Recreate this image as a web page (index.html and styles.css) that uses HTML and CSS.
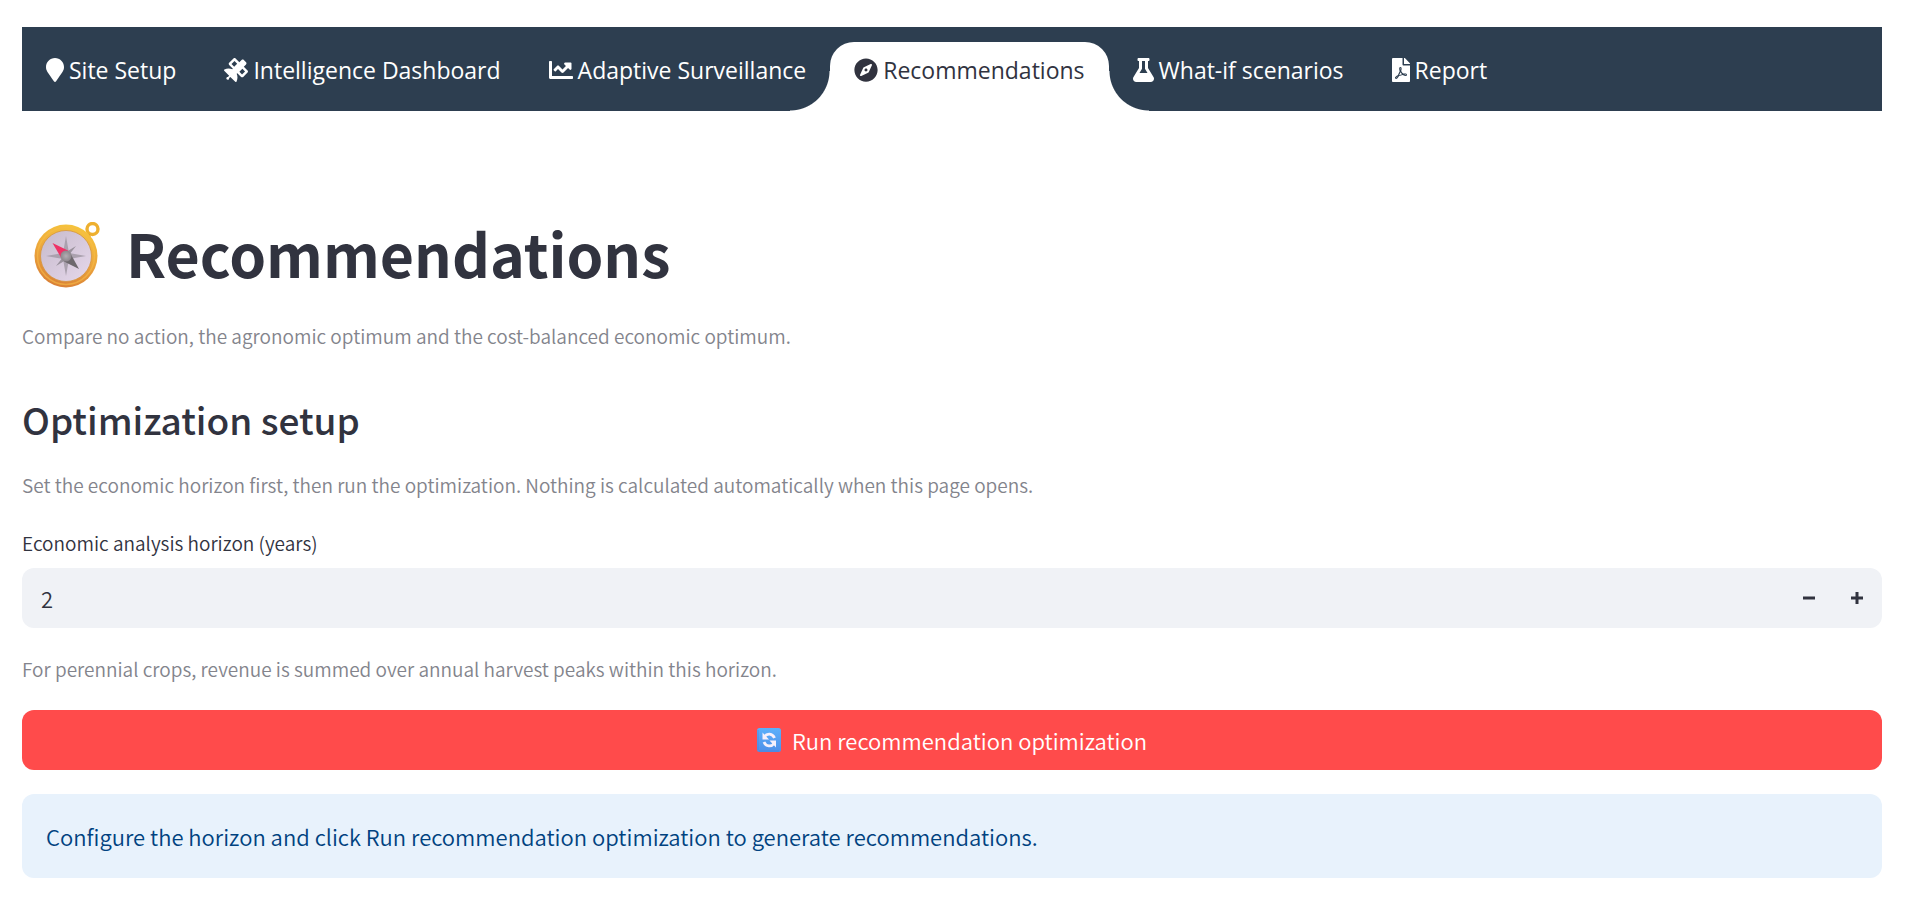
FILE: index.html
```
<!DOCTYPE html>
<html lang="en">
  <head>
    <meta charset="UTF-8" />
    <meta name="viewport" content="width=device-width, initial-scale=1.0" />
    <title>Recommendations</title>
    <link rel="stylesheet" href="styles.css">
  </head>
  <body>
    <nav class="navbar">
      <a class="tab" href="#site-setup">
        <svg class="icon" viewBox="0 0 384 512" width="18" height="24" aria-hidden="true"><path d="M172.268 501.67C26.97 291.031 0 269.413 0 192 0 85.961 85.961 0 192 0s192 85.961 192 192c0 77.413-26.97 99.031-172.268 309.67-9.535 13.774-29.93 13.773-39.464 0z"/></svg>
        Site Setup
      </a>
      <a class="tab" href="#dashboard">
        <svg class="icon" viewBox="0 0 512 512" width="24" height="24" aria-hidden="true"><path fill-rule="evenodd" d="M502.700 265l-80.300-80.400 47.800-47.900c13.100-13.100 13.100-34.400 0-47.500l-47.500-47.500c-13.100-13.100-34.400-13.100-47.500 0l-47.800 47.900-80.300-80.300c-12.400-12.400-32.600-12.400-45 0l-92.600 92.600c-12.400 12.400-12.400 32.600 0 45l80.300 80.300-13.800 13.800C127 220 64 217 9 246c-10 5-12 18-4 26l105 106-26 26c-19-4-35 11-35 30 0 17 13 30 30 30 19 0 34-16 30-35l26-26 105 105c8 8 21 6 26-4 29-55 26-118 4.800-166.900l13.800-13.800 80.300 80.300c12.400 12.400 32.600 12.400 45 0l92.700-92.700c12.400-12.400 12.400-32.600 0-46zM224 63l57 57-64 64-57-57zM385 351l-57-57 64-64 57 57z"/></svg>
        Intelligence Dashboard
      </a>
      <a class="tab" href="#surveillance">
        <svg class="icon" viewBox="0 0 512 512" width="24" height="24" aria-hidden="true"><path d="M496 384H64V80c0-8.840-7.160-16-16-16H16C7.160 64 0 71.160 0 80v336c0 17.670 14.330 32 32 32h464c8.840 0 16-7.160 16-16v-32c0-8.840-7.160-16-16-16zM464 96H345.940c-21.380 0-32.090 25.850-16.970 40.970l32.400 32.400L288 242.750l-73.370-73.370c-12.500-12.500-32.760-12.500-45.250 0l-68.690 68.690c-6.250 6.250-6.250 16.380 0 22.630l22.620 22.620c6.250 6.250 16.380 6.250 22.630 0L192 237.250l73.370 73.370c12.500 12.500 32.760 12.500 45.250 0l96-96 32.400 32.400c15.120 15.120 40.970 4.410 40.970-16.970V112c.01-8.840-7.150-16-15.990-16z"/></svg>
        Adaptive Surveillance
      </a>
      <a class="tab active" href="#recommendations" aria-current="page">
        <svg class="icon" viewBox="0 0 496 512" width="24" height="24" aria-hidden="true"><path d="M225.380 233.370c-12.500 12.500-12.500 32.760 0 45.250 12.490 12.500 32.760 12.500 45.250 0 12.500-12.500 12.500-32.760 0-45.250-12.500-12.490-32.760-12.490-45.250 0zM248 8C111.030 8 0 119.030 0 256s111.030 248 248 248 248-111.030 248-248S384.970 8 248 8zm126.140 148.050L308.170 300.400a31.938 31.938 0 0 1-15.770 15.770l-144.340 65.970c-16.650 7.610-33.810-9.550-26.200-26.200l65.980-144.350a31.938 31.938 0 0 1 15.770-15.770l144.340-65.970c16.650-7.600 33.800 9.550 26.190 26.200z"/></svg>
        Recommendations
      </a>
      <a class="tab" href="#scenarios">
        <svg class="icon" viewBox="0 0 448 512" width="21" height="24" aria-hidden="true"><path d="M437.200 403.500L320 215V64h8c13.300 0 24-10.700 24-24V24c0-13.300-10.700-24-24-24H120c-13.300 0-24 10.700-24 24v16c0 13.300 10.700 24 24 24h8v151L10.800 403.500C-18.500 450.600 15.300 512 70.900 512h306.200c55.700 0 89.400-61.500 60.100-108.500zM137.900 320l48.200-77.600c3.700-5.200 5.800-11.600 5.800-18.400V64h64v160c0 6.900 2.200 13.200 5.800 18.400l48.200 77.600h-172z"/></svg>
        What-if scenarios
      </a>
      <a class="tab" href="#report">
        <svg class="icon" viewBox="0 0 384 512" width="18" height="24" aria-hidden="true"><path d="M181.900 256.100c-5-16-4.900-46.900-2-46.900 8.400 0 7.600 36.900 2 46.900zm-1.700 47.200c-7.700 20.200-17.300 43.300-28.400 62.700 18.300-7 39-17.200 62.900-21.900-12.700-9.600-24.900-23.400-34.500-40.800zM86.100 428.100c0 .8 13.200-5.400 34.900-40.200-6.700 6.300-29.100 24.500-34.900 40.200zM248 160h136v328c0 13.300-10.700 24-24 24H24c-13.300 0-24-10.700-24-24V24C0 10.700 10.700 0 24 0h200v136c0 13.200 10.800 24 24 24zm-8 171.800c-20-12.200-33.300-29-42.700-53.800 4.500-18.500 11.600-46.600 6.200-64.200-4.700-29.400-42.400-26.500-47.800-6.800-5 18.300-.4 44.100 8.100 77-11.600 27.600-28.700 64.600-40.800 85.800-.1 0-.1.1-.2.1-27.100 13.900-73.600 44.500-54.500 68 5.600 6.900 16 10 21.500 10 17.900 0 35.700-18 61.100-61.800 25.800-8.500 54.100-19.100 79-23.200 21.700 11.800 47.100 19.500 64 19.500 29.200 0 31.200-32 19.700-43.400-13.900-13.600-54.300-9.700-73.600-7.200zM377 105L279 7c-4.500-4.500-10.600-7-17-7h-6v128h128v-6.100c0-6.300-2.500-12.400-7-16.900zm-74.100 255.300c4.100-2.700-2.500-11.900-42.800-9 37.100 15.800 42.800 9 42.800 9z"/></svg>
        Report
      </a>
    </nav>

    <main>
      <h1>
        <svg class="compass" viewBox="0 0 66 66" width="66" height="66" aria-hidden="true">
          <defs>
            <linearGradient id="gold" x1="0.7" y1="0" x2="0.4" y2="1">
              <stop offset="0" stop-color="#f6c63c"/>
              <stop offset="0.5" stop-color="#eda73c"/>
              <stop offset="1" stop-color="#d98036"/>
            </linearGradient>
            <linearGradient id="dial" x1="0" y1="0" x2="1" y2="1">
              <stop offset="0" stop-color="#c6bacb"/>
              <stop offset="1" stop-color="#e6d8ec"/>
            </linearGradient>
            <radialGradient id="hub">
              <stop offset="0" stop-color="#b4adb3"/>
              <stop offset="1" stop-color="#8c868c"/>
            </radialGradient>
          </defs>
          <circle cx="58.500" cy="7" r="5.500" fill="none" stroke="#eeb02f" stroke-width="3.400"/>
          <path d="M51 11l5 1 1 4-4 3z" fill="#e3a02c"/>
          <circle cx="32" cy="34" r="31.500" fill="url(#gold)"/>
          <circle cx="32" cy="34" r="28.500" fill="none" stroke="#f6bd48" stroke-width="1.500" opacity="0.6"/>
          <circle cx="32" cy="34" r="25.500" fill="url(#dial)" stroke="#d5943b" stroke-width="0.800"/>
          <path d="M32 14l3 17h-6zM32 54l3-17h-6zM12 34l17-3v6zM52 34l-17-3v6z" fill="#aaa1ae"/>
          <path d="M42 24l-7 9-3-3zM22 44l7-9 3 3z" fill="#9a929d"/>
          <path d="M18.500 21l15.500 7.500-7 7z" fill="#ee3267"/>
          <path d="M45 47l-15-7.500 7-7z" fill="#6d686d"/>
          <circle cx="32" cy="34" r="5.500" fill="url(#hub)"/>
        </svg>
        Recommendations
      </h1>
      <p class="caption">Compare no action, the agronomic optimum and the cost-balanced economic optimum.</p>

      <h2>Optimization setup</h2>
      <p class="caption">Set the economic horizon first, then run the optimization. Nothing is calculated automatically when this page opens.</p>

      <form id="setupForm">
        <label for="horizon">Economic analysis horizon (years)</label>
        <div class="number-input">
          <input type="number" id="horizon" name="horizon" value="2" min="1" />
          <button type="button" class="step" id="stepDown" aria-label="Decrease">
            <svg viewBox="0 0 12 12" width="12" height="12"><path d="M0 4.500h12v3H0z"/></svg>
          </button>
          <button type="button" class="step" id="stepUp" aria-label="Increase">
            <svg viewBox="0 0 12 12" width="12" height="12"><path d="M4.500 0h3v4.500H12v3H7.500V12h-3V7.500H0v-3h4.500z"/></svg>
          </button>
        </div>
        <p class="caption">For perennial crops, revenue is summed over annual harvest peaks within this horizon.</p>
        <button type="submit" class="run">
          <svg viewBox="0 0 24 24" width="24" height="24" aria-hidden="true">
            <defs>
              <linearGradient id="tile" x1="0" y1="0" x2="0" y2="1">
                <stop offset="0" stop-color="#5cb0fb"/>
                <stop offset="1" stop-color="#4f8fe8"/>
              </linearGradient>
            </defs>
            <rect width="24" height="24" rx="2.500" fill="url(#tile)"/>
            <path d="M1 2v20M2 23h20" stroke="#4a7fd6" stroke-width="1" opacity="0.6"/>
            <path d="M7.500 8.500C10 5 15.500 5 17.500 10M17 15.500C14.500 19 9 19 7 14" fill="none" stroke="#f7f0fb" stroke-width="2.800"/>
            <path d="M5.500 4.500v7H12zM19 19.500v-7h-6.500z" fill="#f7f0fb"/>
          </svg>
          Run recommendation optimization
        </button>
      </form>

      <div class="alert" role="status">Configure the horizon and click Run recommendation optimization to generate recommendations.</div>
    </main>

    <script>
      const horizon = document.getElementById("horizon");

      document.getElementById("stepDown").addEventListener("click", () => horizon.stepDown());
      document.getElementById("stepUp").addEventListener("click", () => horizon.stepUp());
      document.getElementById("setupForm").addEventListener("submit", (e) => e.preventDefault());
    </script>
  </body>
</html>
```

FILE: styles.css
```
* {
  box-sizing: border-box;
}

body {
  margin: 0;
  padding: 27px 43px 24px 22px;
  font-family: "Noto Sans CJK JP", "Noto Sans", sans-serif;
  font-size: 22px;
  font-weight: 350;
  line-height: 36px;
  color: #31333f;
  background-color: #fff;
}

.navbar {
  display: flex;
  height: 84px;
  padding-top: 15px;
  background-color: #2d3e50;
  overflow: hidden;
}

.tab {
  display: flex;
  align-items: flex-start;
  gap: 5px;
  padding: 10px 24px 0;
  font-family: "Open Sans", "Noto Sans", sans-serif;
  font-size: 23px;
  font-weight: 400;
  color: #fff;
  text-decoration: none;
  white-space: nowrap;
}

.icon {
  flex: none;
  margin-top: 6px;
  fill: currentColor;
}

.tab.active {
  position: relative;
  color: #31333f;
  background-color: #fff;
  border-radius: 24px 24px 0 0;
}

/* curved feet on both sides of the active tab */
.tab.active::before,
.tab.active::after {
  content: "";
  position: absolute;
  bottom: 0;
  width: 40px;
  height: 40px;
}

.tab.active::before {
  right: 100%;
  background: radial-gradient(circle at 0 0, transparent 39px, #fff 40px);
}

.tab.active::after {
  left: 100%;
  background: radial-gradient(circle at 100% 0, transparent 39px, #fff 40px);
}

h1 {
  display: flex;
  align-items: flex-start;
  gap: 26px;
  margin: 104px 0 0;
  padding: 0 12px;
  font-size: 59px;
  font-weight: 700;
  line-height: 76px;
}

.compass {
  flex: none;
  margin-top: 7px;
}

h2 {
  margin: 41px 0 0;
  font-size: 37px;
  font-weight: 500;
  line-height: 50px;
}

.caption {
  margin: 24px 0 0;
  font-size: 19px;
  line-height: 34px;
  color: #83848c;
}

h1 + .caption {
  margin-top: 28px;
}

label {
  display: block;
  margin: 24px 0 8px;
  font-size: 19px;
  line-height: 34px;
}

.number-input {
  display: flex;
  height: 60px;
  padding: 0 1px;
  background-color: #f0f2f6;
  border-radius: 12px;
  overflow: hidden;
}

.number-input input {
  flex: 1;
  min-width: 0;
  padding: 0 18px;
  font: inherit;
  color: inherit;
  background: none;
  border: none;
  outline: none;
  appearance: textfield;
}

.number-input input::-webkit-inner-spin-button {
  display: none;
}

.step {
  display: flex;
  align-items: center;
  justify-content: center;
  width: 48px;
  padding: 0;
  fill: #31333f;
  background: none;
  border: none;
  cursor: pointer;
}

.run {
  display: flex;
  align-items: center;
  justify-content: center;
  gap: 11px;
  width: 100%;
  height: 60px;
  margin-top: 24px;
  padding: 0 18px;
  font: inherit;
  color: #fff;
  background-color: #ff4b4b;
  border: none;
  border-radius: 12px;
  cursor: pointer;
}

.alert {
  margin-top: 24px;
  padding: 24px;
  color: #004280;
  background-color: #e8f2fc;
  border-radius: 12px;
}
```
